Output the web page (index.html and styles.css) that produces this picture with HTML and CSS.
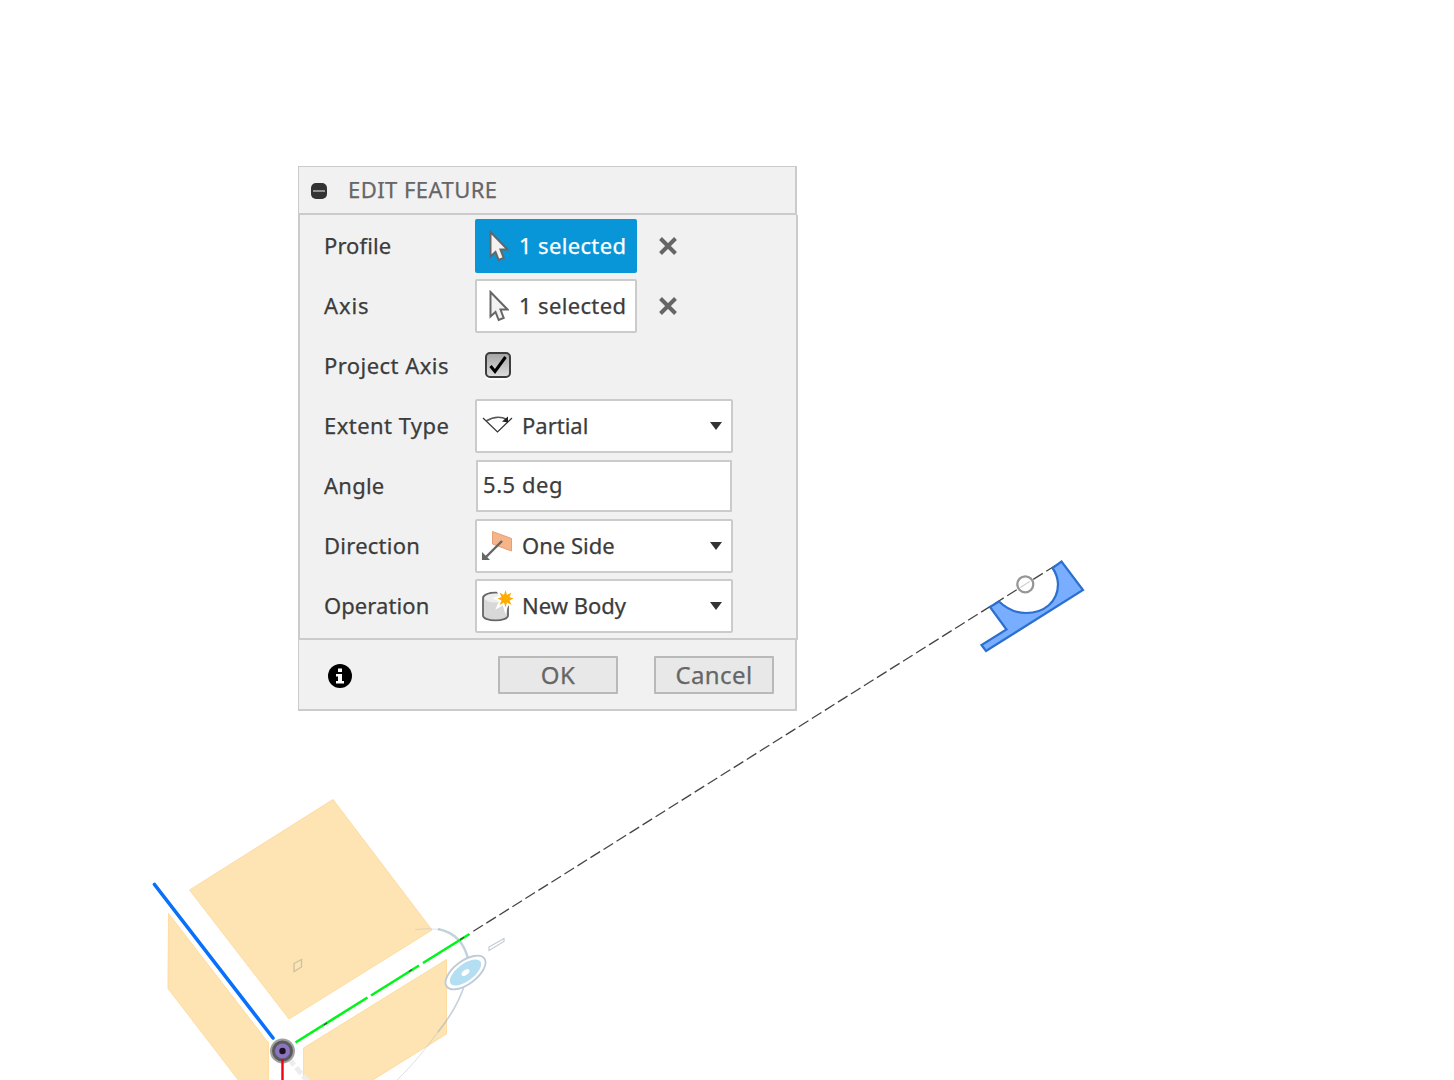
FILE: index.html
```html
<!DOCTYPE html>
<html lang="en">
<head>
<meta charset="utf-8">
<title>Edit Feature</title>
<link rel="stylesheet" href="styles.css">
</head>
<body>
<svg class="scene" width="1454" height="1080" viewBox="0 0 1454 1080" aria-hidden="true">
  <g fill="#fee3b3" stroke="#fedca2" stroke-width="1">
    <path d="M333 799.500L432 930L289 1019L189.500 890Z"/>
    <path d="M168.500 913.500L268.500 1043V1090H246L168 988.500Z"/>
    <path d="M303.500 1048L446.500 959.500V1034L360 1088H303.500Z"/>
  </g>
  <path d="M294 963.500L301.500 959.500V967L294 971.500Z" fill="none" stroke="#c9c2a4" stroke-width="1.300"/>
  <g fill="none" stroke="#9fb4c3">
    <path d="M415 929.500Q429 928 440 929.500" stroke-width="1" opacity=".35"/>
    <path d="M438 929Q463 934 468.500 961" stroke-width="2.500" opacity=".6"/>
    <path d="M465 983C460 1001 450 1017 438 1032" stroke-width="1.600" opacity=".6"/>
    <path d="M438 1032C427 1047 412 1066 397 1080" stroke-width="1" opacity=".4"/>
  </g>
  <g transform="translate(465.500 972.500) rotate(-37)">
    <ellipse rx="23.500" ry="11.500" fill="#fff" stroke="#bfcbd7" stroke-width="1.800"/>
    <ellipse rx="18.500" ry="8.500" fill="#b4def2"/>
    <ellipse rx="4.500" ry="2.500" fill="#fff"/>
  </g>
  <path d="M489 947L504 938.500V941.500L489 950.500Z" fill="#fff" stroke="#c2ccd6" stroke-width="1.200"/>
  <path d="M473.300 931.300L1062 561.300" fill="none" stroke="#444" stroke-width="1.300" stroke-dasharray="11.300 4.080"/>
  <path d="M295.500 1042.500L367.500 997.500M371 995.500L419 965.500M423 963L469.500 934" stroke="#00f51a" stroke-width="2.600"/>
  <path d="M324 1025L327 1023M409 971.500L412 969.500M460 939.700L464 937.200" stroke="#345834" stroke-width="1.300"/>
  <path d="M154.500 884.500L273 1038" stroke="#0870fa" stroke-width="3.600" stroke-linecap="round"/>
  <path d="M289 1059L310 1084" stroke="#ededed" stroke-width="5" stroke-dasharray="8 3"/>
  <circle cx="282.500" cy="1051" r="12.500" fill="#a1a1a1"/>
  <circle cx="282.500" cy="1051" r="9" fill="#8c74c0" stroke="#5b5b5e" stroke-width="3"/>
  <circle cx="282.500" cy="1051" r="3.200" fill="#17131f"/>
  <path d="M282.500 1059V1080" stroke="#f00012" stroke-width="2.400"/>
  <path d="M990 607L999 601.500C1008 610 1016 613 1026 613C1044 613 1058 602 1058 584Q1057.500 575 1052.500 568L1061.500 561.500L1083 590L986 651L981.500 645L1006.500 629.500Z" fill="#78adff" stroke="#2c70cf" stroke-width="2.200"/>
  <circle cx="1025.300" cy="584.300" r="8" fill="#fff" fill-opacity=".75" stroke="#969696" stroke-width="2.300"/>
</svg>

<main class="panel">
  <header class="panel-head">
    <svg class="collapse" width="16" height="16" viewBox="0 0 16 16"><rect width="16" height="16" rx="5" fill="#333"/><path d="M2 8H14" stroke="#aaa" stroke-width="1.600"/></svg>
    <h1 class="title">EDIT FEATURE</h1>
  </header>
  <section class="fields">
    <div class="row">
      <span class="label snug">Profile</span>
      <button class="pick active"><svg class="cursor" width="20" height="32" viewBox="0 0 20 32"><path d="M1.500 2L18.500 19.500H11.500L14.700 28L9.700 30L6.500 22L1.500 26.500Z" fill="#f2f2f2" stroke="#666" stroke-width="2"/></svg><span class="pick-text">1 selected</span></button>
      <svg class="clear" width="18" height="18" viewBox="0 0 18 18"><path d="M1.500 1.500L16.500 16.500M16.500 1.500L1.500 16.500" stroke="#666" stroke-width="4"/></svg>
    </div>
    <div class="row">
      <span class="label wide">Axis</span>
      <button class="pick"><svg class="cursor" width="20" height="32" viewBox="0 0 20 32"><path d="M1.500 2L18.500 19.500H11.500L14.700 28L9.700 30L6.500 22L1.500 26.500Z" fill="#f2f2f2" stroke="#666" stroke-width="2"/></svg><span class="pick-text">1 selected</span></button>
      <svg class="clear" width="18" height="18" viewBox="0 0 18 18"><path d="M1.500 1.500L16.500 16.500M16.500 1.500L1.500 16.500" stroke="#666" stroke-width="4"/></svg>
    </div>
    <div class="row">
      <span class="label loose">Project Axis</span>
      <span class="check"><svg width="22" height="22" viewBox="0 0 22 22"><path d="M3.500 12L8 17.500L18.500 3" fill="none" stroke="#000" stroke-width="3"/></svg></span>
    </div>
    <div class="row">
      <span class="label loose">Extent Type</span>
      <div class="select"><svg class="icon" width="32" height="32" viewBox="0 0 32 32"><path d="M2 8L16.500 22L31 8" fill="none" stroke="#333" stroke-width="1.200"/><path d="M5 11Q16 4.500 26 9.500" fill="none" stroke="#555" stroke-width="1.500"/><path d="M27 6.500V12.500L21 11.500Z" fill="#222"/></svg><span class="value">Partial</span><svg class="arrow" width="12" height="8" viewBox="0 0 12 8"><path d="M0 0H12L6 8Z" fill="#333"/></svg></div>
    </div>
    <div class="row">
      <span class="label">Angle</span>
      <div class="input">5.5 deg</div>
    </div>
    <div class="row">
      <span class="label">Direction</span>
      <div class="select"><svg class="icon" width="32" height="32" viewBox="0 0 32 32"><path d="M11.500 1.500L30.500 8.500V21L11.500 14Z" fill="#f6b48a" stroke="#e5a075"/><path d="M21 11L5 27" stroke="#666" stroke-width="2.400"/><path d="M1 22L9 30H1Z" fill="#666"/></svg><span class="value">One Side</span><svg class="arrow" width="12" height="8" viewBox="0 0 12 8"><path d="M0 0H12L6 8Z" fill="#333"/></svg></div>
    </div>
    <div class="row">
      <span class="label snug">Operation</span>
      <div class="select"><svg class="icon" width="32" height="32" viewBox="0 0 32 32"><path d="M2 8V25.500C2 32 27 32 27 25.500V8C27 1 2 1 2 8Z" fill="#d8d8d8" stroke="#666" stroke-width="1.800"/><ellipse cx="14.500" cy="8" rx="11" ry="4.500" fill="#eee"/><path d="M24.500 0L26 5L30.500 2.500L28.500 7L32.500 8.500L28.500 10.500L30.500 15L26 12.500L24.500 17.500L23 12.500L18.500 15L20.500 10.500L16.500 8.500L20.500 7L18.500 2.500L23 5Z" fill="#ffab00" stroke="#fff" stroke-width="4" paint-order="stroke"/></svg><span class="value">New Body</span><svg class="arrow" width="12" height="8" viewBox="0 0 12 8"><path d="M0 0H12L6 8Z" fill="#333"/></svg></div>
    </div>
  </section>
  <footer class="panel-foot">
    <svg class="info" width="24" height="24" viewBox="0 0 24 24"><circle cx="12" cy="12" r="12" fill="#000"/><path d="M10 4.500H14V8H10ZM8 10H14V17H16V19.500H8V17H10V12.500H8Z" fill="#fff"/></svg>
    <button class="btn ok">OK</button>
    <button class="btn">Cancel</button>
  </footer>
</main>
</body>
</html>
```

FILE: styles.css
```css
* { box-sizing: border-box; }
body {
  margin: 0;
  width: 1454px;
  height: 1080px;
  padding: 166px 0 0 298px;
  overflow: hidden;
  background: #fff;
  font-family: "Noto Sans", "Open Sans", sans-serif;
  font-size: 22px;
  color: #3c3c3c;
  -webkit-text-stroke: .25px currentColor;
}
.scene { position: absolute; top: 0; left: 0; }
.panel { position: relative; width: 500px; }
.panel-head {
  display: flex;
  align-items: center;
  width: 499px;
  height: 49px;
  padding-left: 12px;
  background: #f1f1f1;
  border: solid #cbcbcb;
  border-width: 1px 2px 2px 1px;
}
.collapse { margin-top: 1px; }
.title {
  margin: 0 0 0 21px;
  padding-bottom: 2px;
  font-size: 22px;
  font-weight: 400;
  letter-spacing: .45px;
  color: #666;
}
.fields {
  height: 425px;
  padding-top: 1px;
  background: #f1f1f1;
  border: 2px solid #cbcbcb;
  border-top: 0;
}
.row { display: flex; align-items: center; height: 60px; padding-left: 24px; }
.label { width: 151px; padding-bottom: 2px; white-space: nowrap; letter-spacing: .25px; }
.label.snug { letter-spacing: .08px; }
.label.loose { letter-spacing: .45px; }
.label.wide { letter-spacing: .9px; }
.pick, .select {
  display: flex;
  align-items: center;
  height: 54px;
  border: 2px solid #cbcbcb;
  border-radius: 2px;
  background: #fff;
  font: inherit;
  color: inherit;
}
.pick { width: 162px; padding: 0 0 0 12px; }
.pick.active { background: #0896d9; border-color: #0896d9; color: #fff; }
.pick-text { margin-left: 10px; padding-bottom: 2px; white-space: nowrap; letter-spacing: .35px; }
.clear { margin-left: 22px; }
.check {
  display: flex;
  align-items: center;
  justify-content: center;
  width: 26px;
  height: 26px;
  margin: -2px 0 0 10px;
  border: 2px solid #3d3d3d;
  border-radius: 5px;
  background: linear-gradient(#a5a5a5, #dcdcdc);
  box-shadow: 0 2px 1px #fff;
}
.select { width: 258px; padding: 0 9px 0 4px; }
.value { margin-left: 9px; padding-bottom: 2px; }
.arrow { margin-left: auto; }
.input {
  width: 256px;
  height: 52px;
  margin-left: 1px;
  padding: 0 5px;
  line-height: 44px;
  letter-spacing: .55px;
  border: 2px solid #cbcbcb;
  background: #fff;
}
.panel-foot {
  display: flex;
  align-items: center;
  width: 499px;
  height: 71px;
  padding: 0 21px 0 29px;
  background: #f1f1f1;
  border: solid #cbcbcb;
  border-width: 0 2px 2px 1px;
}
.info { margin-top: 3px; }
.btn {
  width: 120px;
  height: 38px;
  margin: 1px 0 0;
  padding: 0;
  border: 2px solid #b9b9b9;
  border-radius: 1px;
  background: #e8e8e8;
  font: inherit;
  font-size: 24px;
  line-height: 32px;
  letter-spacing: .4px;
  color: #666;
}
.ok { margin-left: auto; margin-right: 36px; }
```
